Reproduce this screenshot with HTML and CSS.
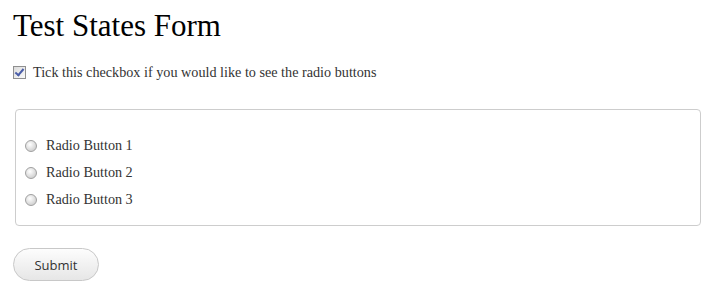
FILE: index.html
```html
<!DOCTYPE html>
<html lang="en">
<head>
    <meta charset="UTF-8">
    <title>Test States Form</title>
    <link rel="stylesheet" href="styles.css">
</head>
<body>
    <h1>Test States Form</h1>
    <form name="states">
        <div class="tick">
            <input type="checkbox" id="show" checked>
            <label for="show">Tick this checkbox if you would like to see the radio buttons</label>
        </div>
        <fieldset class="radios">
            <div class="opt"><input type="radio" name="rb" id="rb1"><label for="rb1">Radio Button 1</label></div>
            <div class="opt"><input type="radio" name="rb" id="rb2"><label for="rb2">Radio Button 2</label></div>
            <div class="opt"><input type="radio" name="rb" id="rb3"><label for="rb3">Radio Button 3</label></div>
        </fieldset>
        <button type="submit" class="btn">Submit</button>
    </form>
</body>
</html>
```

FILE: styles.css
```css
*{
    margin: 0;
    padding: 0;
}
body{
    background: #fff;
    color: #222;
    font-family: "Liberation Serif", serif;
    padding: 8px 13px;
}
h1{
    font-weight: normal;
    font-size: 31px;
    line-height: 36px;
    color: #000;
}
.tick{
    display: flex;
    align-items: center;
    height: 18px;
    margin-top: 19px;
    font-size: 14.2px;
    color: #333;
}
.tick label{
    margin-left: 7px;
}
/* checkbox drawn by hand */
.tick input{
    appearance: none;
    width: 13px;
    height: 13px;
    border: 1px solid #8f8f8f;
    background: linear-gradient(135deg, #dcdcdc, #fafafa);
    position: relative;
    box-sizing: border-box;
}
.tick input:checked::after{
    content: "";
    position: absolute;
    left: 3px;
    top: 0px;
    width: 3px;
    height: 7px;
    border: solid #4a5da8;
    border-width: 0 2px 2px 0;
    transform: rotate(40deg);
}
.radios{
    border: 1px solid #cdcdcd;
    border-radius: 4px;
    margin: 28px 11px 0 2px;
    padding: 22px 9px 12px;
}
.opt{
    display: flex;
    align-items: center;
    height: 27px;
    font-size: 14.2px;
    color: #333;
}
.opt label{
    margin-left: 9px;
}
.opt input{
    appearance: none;
    width: 12px;
    height: 12px;
    border-radius: 50%;
    border: 1px solid #a0a0a0;
    background: radial-gradient(circle at 40% 35%, #fff, #d4d4d4 70%);
    box-sizing: border-box;
}
.btn{
    margin-top: 22px;
    width: 86px;
    height: 33px;
    border: 1px solid #c8c8c8;
    border-radius: 17px;
    background: linear-gradient(#fdfdfd, #e6e6e6);
    font-family: "Open Sans", sans-serif;
    font-size: 13px;
    color: #333;
}
```
